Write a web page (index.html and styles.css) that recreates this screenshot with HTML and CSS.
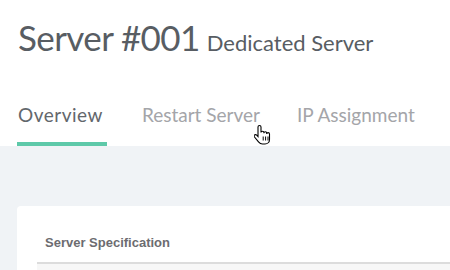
FILE: index.html
```html
<!DOCTYPE html>
<html>
<head>
<meta charset="utf-8">
<link rel="stylesheet" href="styles.css">
</head>
<body>
<header class="header">
  <h1 class="title"><span class="title-main">Server #001</span><span class="title-sub">Dedicated Server</span></h1>
  <nav class="tabs">
    <a class="tab tab-active">Overview</a>
    <a class="tab">Restart Server</a>
    <a class="tab tab-last">IP Assignment</a>
  </nav>
</header>
<main class="content">
  <section class="card">
    <div class="card-inner">
      <h2 class="card-title">Server Specification</h2>
      <div class="card-body"></div>
    </div>
  </section>
</main>
<svg class="cursor" width="18" height="22" viewBox="0 0 18 22">
  <path d="M5.5 1.5c-.9 0-1.5.7-1.5 1.5v9.5l-1.3-1.4c-.7-.7-1.8-.7-2.3 0-.5.5-.4 1.3.1 1.9l4 4.9c1 1.2 2 2.1 4 2.1h2.5c2.6 0 4.5-2 4.5-4.6V10c0-.8-.6-1.4-1.4-1.4s-1.4.6-1.4 1.4v-.8c0-.8-.6-1.4-1.4-1.4s-1.4.6-1.4 1.4v-.6c0-.8-.6-1.4-1.4-1.4S7 7.8 7 8.6V3c0-.8-.6-1.5-1.5-1.5z" fill="#fff" stroke="#000" stroke-width="1.1"/>
  <path d="M9.2 12.5v4M11.6 12.5v4M14 12.5v4" stroke="#000" stroke-width="1"/>
</svg>
</body>
</html>
```
FILE: styles.css
```css
html, body {
  margin: 0;
  padding: 0;
}
body {
  background: #f0f3f6;
  font-family: Lato, "Open Sans", sans-serif;
  width: 450px;
  height: 270px;
  overflow: hidden;
  position: relative;
}
.header {
  background: #fff;
  padding: 14px 0 0 18px;
}
.title {
  margin: 0;
  display: flex;
  align-items: baseline;
  gap: 7px;
  color: #585d63;
  font-weight: 400;
  line-height: 46px;
}
.title-main {
  font-size: 35px;
  letter-spacing: -0.6px;
}
.title-sub {
  font-size: 22px;
  letter-spacing: 0;
}
.tabs {
  display: flex;
  gap: 35px;
  margin-top: 36px;
}
.tab {
  font-size: 19px;
  color: #a4a5a9;
  padding: 0 0 15px;
  line-height: 25px;
  border-bottom: 4px solid transparent;
}
.tab-last {
  margin-left: 2px;
}
.tab-active {
  color: #63676c;
  border-bottom-color: #5ec9a9;
  margin-left: -1px;
  padding: 0 4px 15px 1px;
  letter-spacing: 0.5px;
}
.content {
  padding: 60px 0 0 17px;
}
.card {
  background: #fff;
  border-radius: 4px 0 0 0;
  padding-top: 29px;
}
.card-inner {
  margin-left: 20px;
}
.card-title {
  margin: 0;
  padding: 0 0 12px 8px;
  font-family: "Liberation Sans", Arial, sans-serif;
  font-weight: 700;
  font-size: 13px;
  color: #6c6c70;
  border-bottom: 2px solid #dcdcdc;
}
.card-body {
  background: #f7f7f7;
  height: 6px;
}
.cursor {
  position: absolute;
  left: 254px;
  top: 124px;
}
```
